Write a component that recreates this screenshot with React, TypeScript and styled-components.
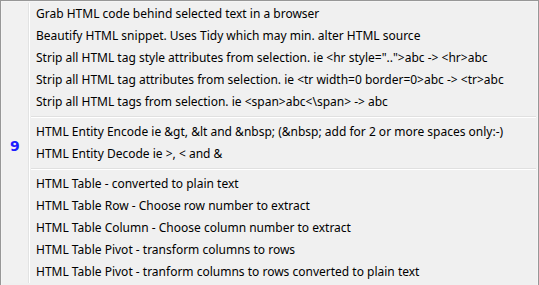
import styled, { createGlobalStyle } from "styled-components";

const groups: { badge?: string; items: string[] }[] = [
  {
    items: [
      "Grab HTML code behind selected text in a browser",
      "Beautify HTML snippet. Uses Tidy which may min. alter HTML source",
      'Strip all HTML tag style attributes from selection. ie <hr style="..">abc -> <hr>abc',
      "Strip all HTML tag attributes from selection. ie <tr width=0 border=0>abc -> <tr>abc",
      "Strip all HTML tags from selection. ie <span>abc<\\span> -> abc",
    ],
  },
  {
    badge: "9",
    items: [
      "HTML Entity Encode ie &gt, &lt and &nbsp; (&nbsp; add for 2 or more spaces only:-)",
      "HTML Entity Decode ie >, < and &",
    ],
  },
  {
    items: [
      "HTML Table - converted to plain text",
      "HTML Table Row - Choose row number to extract",
      "HTML Table Column - Choose column number to extract",
      "HTML Table Pivot - transform columns to rows",
      "HTML Table Pivot - tranform columns to rows converted to plain text",
    ],
  },
];

function App() {
  return (
    <>
      <GlobalStyle />
      <Menu>
        {groups.map((group, gi) => (
          <div key={gi}>
            {gi > 0 && (
              <Row>
                <Gutter />
                <Separator />
              </Row>
            )}
            <Row>
              <Gutter>{group.badge && <Badge>{group.badge}</Badge>}</Gutter>
              <Items>
                {group.items.map((label) => (
                  <Item key={label}>{label}</Item>
                ))}
              </Items>
            </Row>
          </div>
        ))}
      </Menu>
    </>
  );
}

const GlobalStyle = createGlobalStyle`
  html, body {
    margin: 0;
    padding: 0;
    width: 539px;
    height: 285px;
    overflow: hidden;
    background: #f0f0f0;
  }
`;

const Menu = styled.div`
  width: 539px;
  height: 300px;
  box-sizing: border-box;
  border: 1px solid #979797;
  padding: 2px;
  background: #f0f0f0;
  box-shadow: inset 1px 1px 0 #f5f5f5, inset -1px 0 0 #f5f5f5;
  font-family: "Noto Sans", "Segoe UI", sans-serif;
  font-size: 12px;
  color: #000;
`;

const Row = styled.div`
  display: flex;
`;

const Gutter = styled.div`
  width: 26px;
  flex: none;
  display: flex;
  align-items: center;
  padding-left: 7px;
  box-sizing: border-box;
  background: #f1f1f1;
  border-right: 1px solid #e2e3e3;
  box-shadow: 1px 0 0 #ffffff;
  margin-right: 1px;
`;

const Badge = styled.span`
  font-family: "DejaVu Sans", sans-serif;
  font-weight: bold;
  font-size: 14px;
  color: #1b1bff;
  line-height: 1;
  margin-top: 5px;
`;

const Items = styled.div`
  flex: 1;
  display: flex;
  flex-direction: column;
`;

const Item = styled.div`
  height: 22px;
  line-height: 22px;
  padding-left: 6px;
  white-space: pre;
`;

const Separator = styled.div`
  flex: 1;
  height: 8px;
  box-sizing: border-box;
  margin-left: 1px;
  padding-top: 3px;

  &::before {
    content: "";
    display: block;
    height: 0;
    border-top: 1px solid #e0e0e0;
    border-bottom: 1px solid #ffffff;
  }
`;

export default App;
